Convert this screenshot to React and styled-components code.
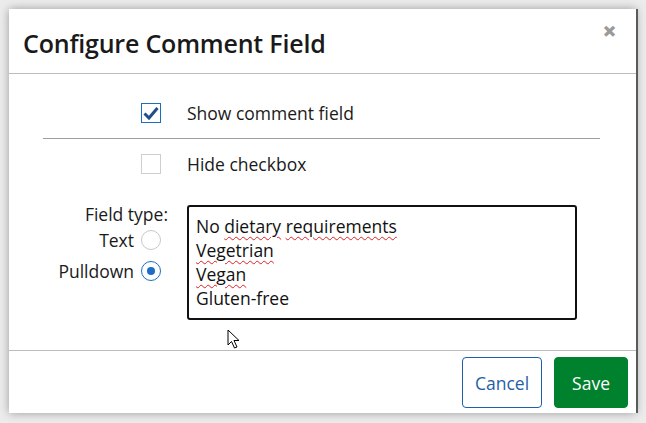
import React from 'react';
import styled, { createGlobalStyle } from 'styled-components';

const Global = createGlobalStyle`
html, body {
	margin: 0;
	padding: 0;
	background: #f2f2f2;
	font-family: "Open Sans", "Noto Sans", sans-serif;
	color: #1a1a1a;
}
`

const Page = styled.div`
width: 646px;
height: 423px;
padding: 9px 10px 10px 9px;
box-sizing: border-box;
position: relative;
background: #ececec;
`

const Modal = styled.div`
width: 627px;
height: 404px;
background: #fff;
display: flex;
flex-direction: column;
box-shadow: 2px 0 0 #5a5a5a, 0 0 9px rgba(0, 0, 0, .35);
`

const Header = styled.div`
height: 64px;
border-bottom: 1px solid #bdbdbd;
display: flex;
align-items: center;
justify-content: space-between;
padding: 0 14px 0 14px;
`

const Title = styled.h1`
margin: 0;
margin-top: 4px;
font-size: 25px;
font-weight: 600;
letter-spacing: -0.2px;
color: #1a1a1a;
`

const Close = styled.span`
align-self: flex-start;
margin-top: 9px;
margin-right: 5px;
font-size: 25px;
font-weight: 800;
color: #9a9a9a;
line-height: 1;
`

const Body = styled.div`
flex: 1;
padding-top: 28px;
`

const Row = styled.div`
display: flex;
align-items: center;
height: 22px;
`

const LeftCell = styled.div`
width: 159px;
box-sizing: border-box;
padding-right: 7px;
display: flex;
justify-content: flex-end;
`

const Checkbox = styled.div`
width: 20px;
height: 20px;
box-sizing: border-box;
border: 1px solid ${p => p.checked ? '#1a6fc4' : '#cfcfcf'};
display: flex;
align-items: center;
justify-content: center;
`

const Label = styled.span`
margin-left: 19px;
font-size: 17.5px;
color: #1a1a1a;
`

const Divider = styled.hr`
margin: 14px 36px 14px 34px;
border: none;
border-top: 1px solid #9e9e9e;
`

const FieldSection = styled.div`
display: flex;
margin-top: 30px;
`

const TypeColumn = styled.div`
width: 159px;
display: flex;
flex-direction: column;
align-items: flex-end;
font-size: 17.5px;
`

const TypeTitle = styled.div`
line-height: 22px;
margin-top: -2px;
`

const RadioRow = styled.label`
display: flex;
align-items: center;
gap: 7px;
margin-right: 7px;
height: 22px;
margin-top: ${p => p.first ? '4px' : '9px'};
`

const Radio = styled.span`
width: 20px;
height: 20px;
box-sizing: border-box;
border-radius: 50%;
border: 1px solid ${p => p.checked ? '#1a6fc4' : '#c8c8c8'};
display: flex;
align-items: center;
justify-content: center;
&::after {
	content: '';
	display: ${p => p.checked ? 'block' : 'none'};
	width: 8px;
	height: 8px;
	border-radius: 50%;
	background: #1a6fc4;
}
`

const Options = styled.div`
margin-left: 19px;
margin-top: 0;
width: 390px;
height: 115px;
box-sizing: border-box;
border: 2px solid #111;
border-radius: 3px;
padding: 7px 7px;
font-size: 17.5px;
line-height: 24px;
color: #111;
`

const Spell = styled.span`
text-decoration: underline wavy #e02020;
text-decoration-thickness: 1px;
text-underline-offset: 3px;
`

const Footer = styled.div`
height: 63px;
border-top: 1px solid #bdbdbd;
display: flex;
justify-content: flex-end;
align-items: flex-start;
gap: 12px;
padding: 6px 8px 0 0;
box-sizing: border-box;
`

const Button = styled.button`
height: 51px;
padding: 0 ${p => p.primary ? '17px' : '12px'};
border-radius: 4px;
font-family: "Open Sans", "Noto Sans", sans-serif;
font-size: 17.5px;
border: 1px solid ${p => p.primary ? '#00812d' : '#1f5ea8'};
background: ${p => p.primary ? '#00812d' : '#fff'};
color: ${p => p.primary ? '#fff' : '#1f5ea8'};
`

const Pointer = styled.svg`
position: absolute;
left: 227px;
top: 329px;
`

export default function App() {
	return (
		<>
			<Global />
			<Page>
				<Modal>
					<Header>
						<Title>Configure Comment Field</Title>
						<Close>×</Close>
					</Header>
					<Body>
						<Row>
							<LeftCell>
								<Checkbox checked>
									<svg width="16" height="14" viewBox="0 0 16 14">
										<path d="M1.5 7.5 L6 12 L14.5 2" fill="none" stroke="#1d4f8f" strokeWidth="3" />
									</svg>
								</Checkbox>
							</LeftCell>
							<Label>Show comment field</Label>
						</Row>
						<Divider />
						<Row>
							<LeftCell><Checkbox /></LeftCell>
							<Label>Hide checkbox</Label>
						</Row>
						<FieldSection>
							<TypeColumn>
								<TypeTitle>Field type:</TypeTitle>
								<RadioRow first>Text <Radio /></RadioRow>
								<RadioRow>Pulldown <Radio checked /></RadioRow>
							</TypeColumn>
							<Options>
								<div>No <Spell>dietary</Spell> <Spell>requirements</Spell></div>
								<div><Spell>Vegetrian</Spell></div>
								<div><Spell>Vegan</Spell></div>
								<div>Gluten-free</div>
							</Options>
						</FieldSection>
					</Body>
					<Footer>
						<Button>Cancel</Button>
						<Button primary>Save</Button>
					</Footer>
				</Modal>
				<Pointer width="14" height="20" viewBox="0 0 14 20">
					<path d="M1 1 L1 16 L4.5 12.5 L7.5 19 L10 18 L7 11.5 L12 11.5 Z" fill="#fff" stroke="#000" strokeWidth="1" />
				</Pointer>
			</Page>
		</>
	)
}
